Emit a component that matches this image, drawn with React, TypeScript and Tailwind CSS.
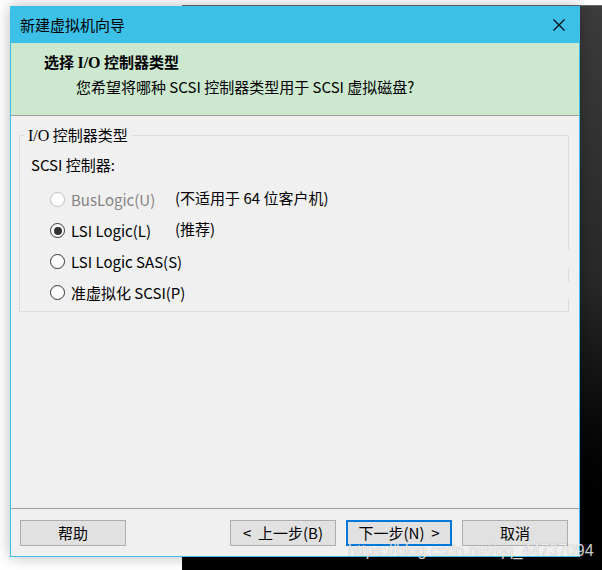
import React from 'react';

const ui = 'font-["Noto_Sans_CJK_SC","Noto_Sans",sans-serif]';

function Radio({ checked, disabled }: { checked?: boolean; disabled?: boolean }) {
  return (
    <span
      className={`flex h-[15px] w-[15px] shrink-0 items-center justify-center rounded-full border bg-white ${
        disabled ? 'border-[#bcbcbc]' : 'border-[#333]'
      }`}
    >
      {checked && <span className="h-[8px] w-[8px] rounded-full bg-[#333]" />}
    </span>
  );
}

function Option({
  label,
  note,
  checked,
  disabled,
}: {
  label: string;
  note?: string;
  checked?: boolean;
  disabled?: boolean;
}) {
  return (
    <div className="flex h-[31px] items-center whitespace-nowrap pl-[30px]">
      <Radio checked={checked} disabled={disabled} />
      <span className={`ml-[6px] w-[104px] shrink-0 ${disabled ? 'text-[#838383]' : 'text-black'}`}>{label}</span>
      {note && <span className="-mt-[3px] text-black">{note}</span>}
    </div>
  );
}

function Button({ children, focused }: { children: React.ReactNode; focused?: boolean }) {
  return (
    <div
      className={`flex h-[26px] w-[106px] items-center justify-center whitespace-pre bg-[#e1e1e1] text-black ${
        focused ? 'border-2 border-[#0078d7]' : 'border border-[#adadad]'
      }`}
    >
      {children}
    </div>
  );
}

export default function App() {
  return (
    <div className={`relative h-[570px] w-[602px] overflow-hidden bg-white text-[15px] leading-[20px] ${ui}`}>
      {/* window behind the dialog */}
      <div className="absolute bottom-0 left-[182px] right-0 top-[5px] border-t border-[#6a6a6a] bg-linear-to-b from-[#3c3c3c] via-[#272727] to-black" />

      {/* dialog */}
      <div className="absolute left-[10px] top-[6px] flex h-[551px] w-[570px] flex-col border border-[#3cc0e8] bg-[#f0f0f0] shadow-[0_0_14px_rgba(0,0,0,0.28)]">
        {/* title bar */}
        <div className="flex h-[36px] shrink-0 items-center justify-between bg-[#3cc0e8] pl-[9px] pr-[14px] text-black">
          <span>新建虚拟机向导</span>
          <svg width="12" height="12" viewBox="0 0 12 12">
            <path d="M0.5 0.5 L11.5 11.5 M11.5 0.5 L0.5 11.5" stroke="#000" strokeWidth="1.1" fill="none" />
          </svg>
        </div>

        {/* header */}
        <div className="h-[73px] shrink-0 border-b border-[#a0a0a0] bg-[#cce8cf] pt-[9px] text-black">
          <div className="pl-[33px] font-bold">
            选择 <span className='font-["Liberation_Serif",serif] text-[16px]'>I/O</span> 控制器类型
          </div>
          <div className="mt-[4px] pl-[65px]">您希望将哪种 SCSI 控制器类型用于 SCSI 虚拟磁盘?</div>
        </div>

        {/* body */}
        <div className="flex-1 pt-[19px]">
          <div className="relative ml-[8px] h-[177px] w-[550px] border border-[#dcdcdc]">
            <span className="absolute -top-[11px] left-[4px] bg-[#f0f0f0] px-[4px] text-black">
              <span className='font-["Liberation_Serif",serif] text-[16px]'>I/O</span> 控制器类型
            </span>
            {/* rendering gaps in the right edge */}
            <span className="absolute -right-px top-[114px] h-[18px] w-px bg-[#f0f0f0]" />
            <span className="absolute -right-px top-[146px] h-[17px] w-px bg-[#f0f0f0]" />
            <div className="pl-[11px] pt-[19px] text-black">SCSI 控制器:</div>
            <div className="mt-[9px]">
              <Option label="BusLogic(U)" note="(不适用于 64 位客户机)" disabled />
              <Option label="LSI Logic(L)" note="(推荐)" checked />
              <Option label="LSI Logic SAS(S)" />
              <Option label="准虚拟化 SCSI(P)" />
            </div>
          </div>
        </div>

        {/* footer */}
        <div className="flex h-[48px] shrink-0 items-start border-t border-[#a0a0a0] pl-[9px] pr-[11px] pt-[11px]">
          <Button>帮助</Button>
          <div className="ml-auto flex gap-[10px]">
            <Button>{'<  上一步(B)'}</Button>
            <Button focused>{'下一步(N)  >'}</Button>
            <Button>取消</Button>
          </div>
        </div>
      </div>

      {/* watermark */}
      <div className='absolute left-[348px] top-[543px] font-["Liberation_Sans",Arial,sans-serif] text-[16px] leading-[16px] text-white/80 [text-shadow:0_0_1px_rgba(0,0,0,0.35)]'>
        https://blog.csdn.net/qq_44737094
      </div>
    </div>
  );
}
